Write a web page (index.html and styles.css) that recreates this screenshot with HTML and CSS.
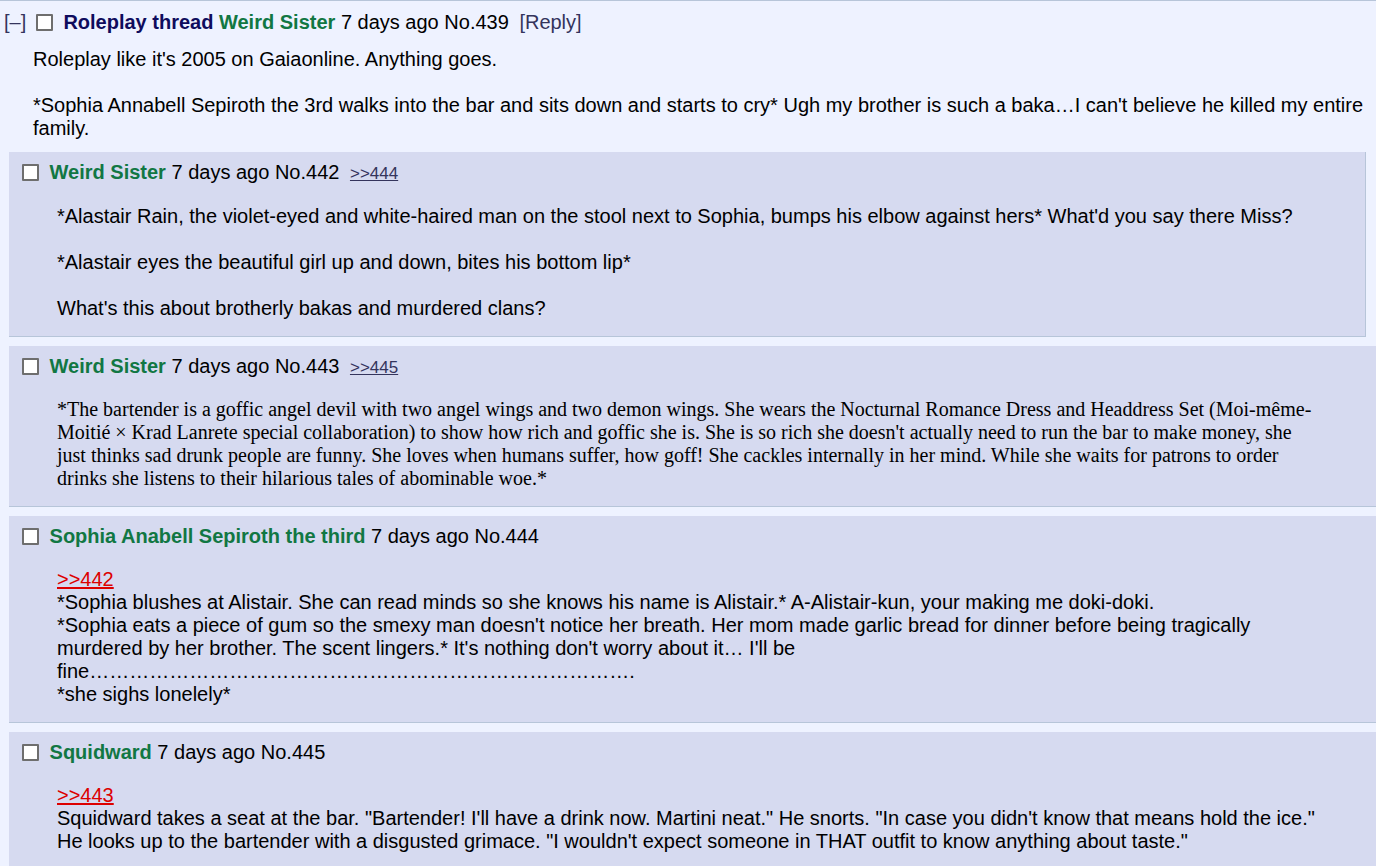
FILE: index.html
```html
<!DOCTYPE html>
<html lang="en">
<head>
    <meta charset="UTF-8">
    <title>Roleplay thread</title>
    <link rel="stylesheet" href="styles.css">
</head>
<body>
    <div class="thread">
        <div class="op">
            <div class="post-info">
                <a class="toggle">[&ndash;]</a>
                <input type="checkbox" class="post-check">
                <span class="subject">Roleplay thread</span>
                <span class="name">Weird Sister</span>
                <span class="date">7 days ago</span>
                <span class="post-num">No.439</span>
                <a class="reply-link">[Reply]</a>
            </div>
            <blockquote class="post-message">
                Roleplay like it's 2005 on Gaiaonline. Anything goes.<br><br>
                *Sophia Annabell Sepiroth the 3rd walks into the bar and sits down and starts to cry* Ugh my brother is such a baka…I can't believe he killed my entire<br>family.
            </blockquote>
        </div>

        <div class="reply fit">
            <div class="post-info">
                <input type="checkbox" class="post-check">
                <span class="name">Weird Sister</span>
                <span class="date">7 days ago</span>
                <span class="post-num">No.442</span>
                <a class="backlink">&gt;&gt;444</a>
            </div>
            <blockquote class="post-message">
                *Alastair Rain, the violet-eyed and white-haired man on the stool next to Sophia, bumps his elbow against hers* What'd you say there Miss?<br><br>
                *Alastair eyes the beautiful girl up and down, bites his bottom lip*<br><br>
                What's this about brotherly bakas and murdered clans?
            </blockquote>
        </div>

        <div class="reply">
            <div class="post-info">
                <input type="checkbox" class="post-check">
                <span class="name">Weird Sister</span>
                <span class="date">7 days ago</span>
                <span class="post-num">No.443</span>
                <a class="backlink">&gt;&gt;445</a>
            </div>
            <blockquote class="post-message serif">
                *The bartender is a goffic angel devil with two angel wings and two demon wings. She wears the Nocturnal Romance Dress and Headdress Set (Moi-même-<br>Moitié × Krad Lanrete special collaboration) to show how rich and goffic she is. She is so rich she doesn't actually need to run the bar to make money, she<br>just thinks sad drunk people are funny. She loves when humans suffer, how goff! She cackles internally in her mind. While she waits for patrons to order<br>drinks she listens to their hilarious tales of abominable woe.*
            </blockquote>
        </div>

        <div class="reply">
            <div class="post-info">
                <input type="checkbox" class="post-check">
                <span class="name">Sophia Anabell Sepiroth the third</span>
                <span class="date">7 days ago</span>
                <span class="post-num">No.444</span>
            </div>
            <blockquote class="post-message">
                <a class="quotelink">&gt;&gt;442</a><br>
                *Sophia blushes at Alistair. She can read minds so she knows his name is Alistair.* A-Alistair-kun, your making me doki-doki.<br>
                *Sophia eats a piece of gum so the smexy man doesn't notice her breath. Her mom made garlic bread for dinner before being tragically<br>murdered by her brother. The scent lingers.* It's nothing don't worry about it… I'll be<br>fine……………………………………………………………………….<br>
                *she sighs lonelely*
            </blockquote>
        </div>

        <div class="reply">
            <div class="post-info">
                <input type="checkbox" class="post-check">
                <span class="name">Squidward</span>
                <span class="date">7 days ago</span>
                <span class="post-num">No.445</span>
            </div>
            <blockquote class="post-message">
                <a class="quotelink">&gt;&gt;443</a><br>
                Squidward takes a seat at the bar. "Bartender! I'll have a drink now. Martini neat." He snorts. "In case you didn't know that means hold the ice."<br>
                He looks up to the bartender with a disgusted grimace. "I wouldn't expect someone in THAT outfit to know anything about taste."
            </blockquote>
        </div>
    </div>
</body>
</html>
```

FILE: styles.css
```css
body {
    margin: 0;
    background-color: #eef2ff;
    color: #000;
    font-family: 'Liberation Sans', Arial, sans-serif;
    font-size: 20px;
    overflow: hidden;
}
.thread {
    width: 1440px;
    border-top: 1px solid #b7c5d9;
    padding-top: 10px;
}
.post-info {
    line-height: 23px;
    white-space: nowrap;
}
.toggle {
    color: #34345c;
    margin-left: 4px;
    margin-right: 4px;
}
.post-check {
    appearance: none;
    -webkit-appearance: none;
    width: 17px;
    height: 17px;
    margin: 0 5px 0 0;
    border: 2px solid #6e6e6e;
    border-radius: 1px;
    background-color: #fff;
    vertical-align: -2px;
    box-sizing: border-box;
}
.subject {
    color: #0f0c5d;
    font-weight: bold;
}
.name {
    color: #117743;
    font-weight: bold;
}
.post-num {
    margin-right: 5px;
}
.reply-link {
    color: #34345c;
}
.backlink {
    color: #34345c;
    font-size: 17px;
    text-decoration: underline;
}
.post-message {
    margin: 14px 0 12px 33px;
    line-height: 23px;
    white-space: nowrap;
}
.reply {
    margin: 0 0 9px 9px;
    padding: 9px 0 0 13px;
    background-color: #d6daf0;
    border-right: 1px solid #b7c5d9;
    border-bottom: 1px solid #b7c5d9;
}
.reply.fit {
    display: table;
    padding-right: 72px;
}
.reply .post-message {
    margin: 20px 0 16px 35px;
}
.reply .post-message.serif {
    margin-top: 19px;
    font-family: 'Liberation Serif', 'Times New Roman', serif;
}
.quotelink {
    color: #dd0000;
    text-decoration: underline;
}
```
